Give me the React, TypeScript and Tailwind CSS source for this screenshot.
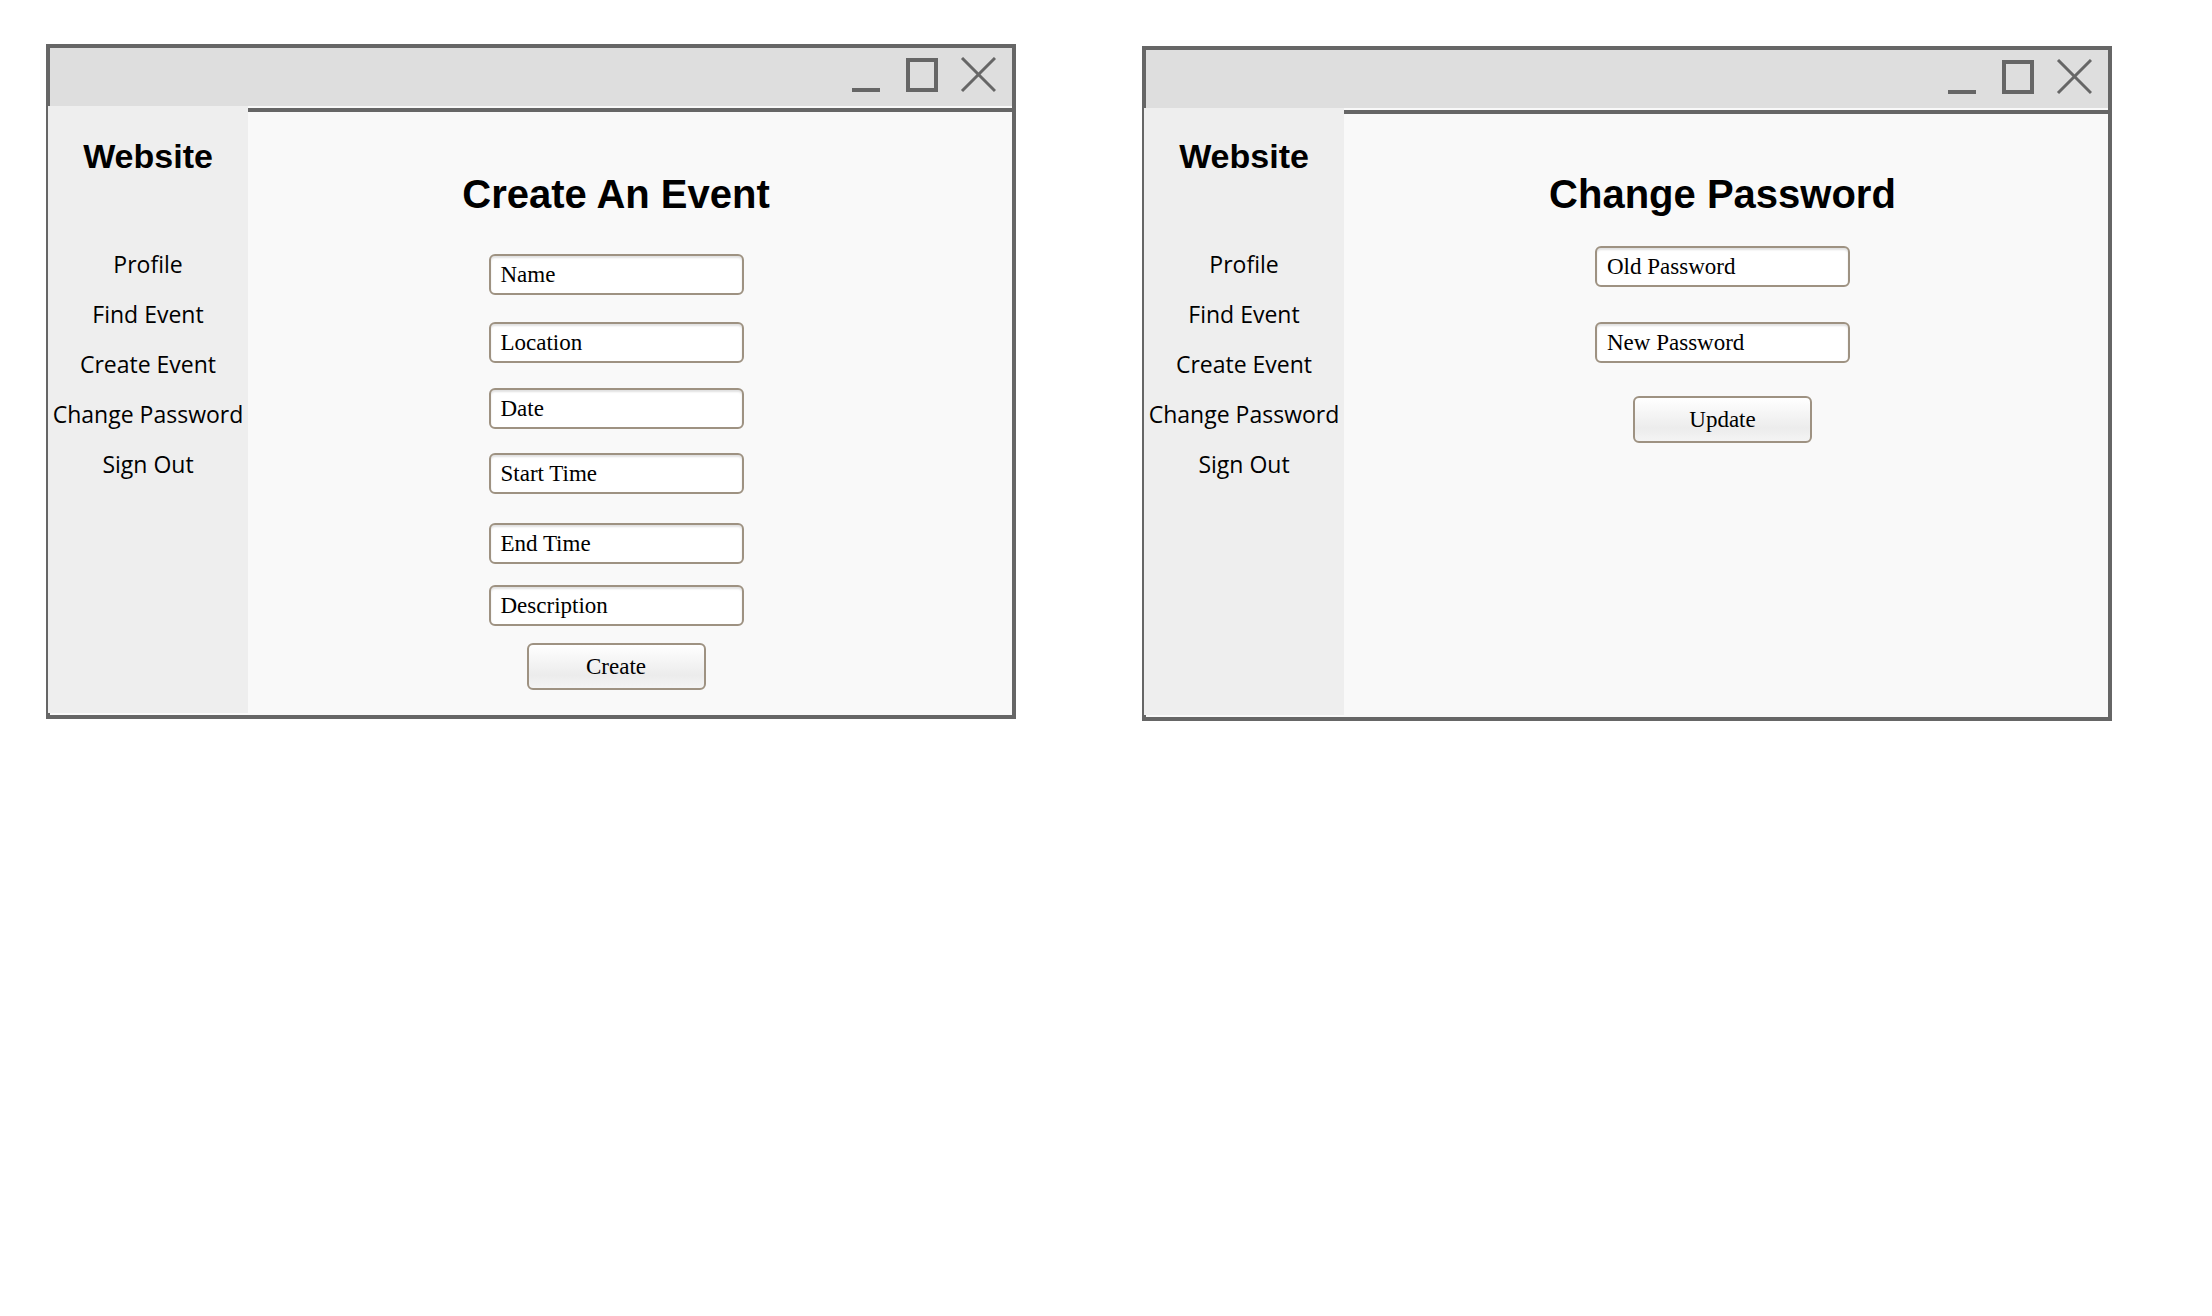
const NAV = ['Profile', 'Find Event', 'Create Event', 'Change Password', 'Sign Out']

const EVENT_FIELDS = [
  { label: 'Name', gap: 'mt-[40px]' },
  { label: 'Location', gap: 'mt-[27px]' },
  { label: 'Date', gap: 'mt-[25px]' },
  { label: 'Start Time', gap: 'mt-[24px]' },
  { label: 'End Time', gap: 'mt-[29px]' },
  { label: 'Description', gap: 'mt-[21px]' },
]

const PASSWORD_FIELDS = [
  { label: 'Old Password', gap: 'mt-[32px]' },
  { label: 'New Password', gap: 'mt-[35px]' },
]

const serif = "font-['Liberation_Serif','Times_New_Roman',serif]"
const sans = "font-['Liberation_Sans',Arial,sans-serif]"

function WindowControls() {
  return (
    <svg width="144" height="36" viewBox="0 0 144 36" className="mt-[9px] mr-[16px]">
      <rect x="0" y="31" width="28" height="4" fill="#666666" />
      <rect x="56" y="3" width="28" height="30" fill="none" stroke="#666666" strokeWidth="4" />
      <path d="M110 1 L143 34 M143 1 L110 34" stroke="#666666" strokeWidth="3" />
    </svg>
  )
}

function Field({ label, gap }: { label: string; gap: string }) {
  return (
    <div
      className={`${gap} ${serif} flex h-[41px] w-[255px] items-center rounded-[6px] border-2 border-[#9e9282] bg-white pl-[10px] text-[23px] leading-none text-black shadow-[inset_0_2px_2px_rgba(0,0,0,0.12)]`}
    >
      {label}
    </div>
  )
}

function Button({ label, gap }: { label: string; gap: string }) {
  return (
    <button
      className={`${gap} ${serif} flex h-[47px] w-[179px] items-center justify-center rounded-[6px] border-2 border-[#9e9282] bg-gradient-to-b from-white via-[#ececec] via-70% to-[#f4f4f4] text-[23px] leading-none text-black`}
    >
      {label}
    </button>
  )
}

function Window({
  title,
  extra,
  sidePad,
  bodyPad,
  children,
}: {
  title: string
  extra: string
  sidePad: string
  bodyPad: string
  children: React.ReactNode
}) {
  return (
    <div className={`${extra} flex h-[675px] w-[970px] flex-col border-4 border-[#666666] bg-[#f9f9f9]`}>
      {/* title bar */}
      <div className="flex h-[58px] shrink-0 justify-end bg-[#dedede]">
        <WindowControls />
      </div>

      <div className="flex flex-1">
        {/* sidebar */}
        <div className={`${sidePad} -ml-[2px] mb-[2px] flex w-[200px] flex-col items-center bg-[#eeeeee]`}>
          <p className={`${sans} h-[34px] text-[34px] leading-[34px] font-bold text-black`}>Website</p>
          <ul className="mt-[66px] flex flex-col items-center">
            {NAV.map(item => (
              <li
                key={item}
                className="h-[50px] font-['Comic_Sans_MS','Open_Sans',sans-serif] text-[23px] leading-[50px] whitespace-nowrap text-black"
              >
                {item}
              </li>
            ))}
          </ul>
        </div>

        {/* content */}
        <div className="mt-[2px] flex flex-1 flex-col border-t-4 border-[#666666]">
          <div className={`${bodyPad} flex flex-col items-center`}>
            <h1 className={`${sans} h-[40px] text-[40px] leading-[40px] font-bold whitespace-nowrap text-black`}>{title}</h1>
            {children}
          </div>
        </div>
      </div>
    </div>
  )
}

export default function App() {
  return (
    <div className="flex min-h-[1316px] w-[2212px] items-start bg-white pt-[44px] pl-[46px]">
      <Window title="Create An Event" extra="" sidePad="pt-[33px]" bodyPad="pt-[62px] pr-[28px]">
        {EVENT_FIELDS.map(f => (
          <Field key={f.label} label={f.label} gap={f.gap} />
        ))}
        <Button label="Create" gap="mt-[17px]" />
      </Window>

      <Window title="Change Password" extra="ml-[126px] mt-[2px]" sidePad="pt-[31px]" bodyPad="pt-[60px] pr-[7px]">
        {PASSWORD_FIELDS.map(f => (
          <Field key={f.label} label={f.label} gap={f.gap} />
        ))}
        <Button label="Update" gap="mt-[33px]" />
      </Window>
    </div>
  )
}
